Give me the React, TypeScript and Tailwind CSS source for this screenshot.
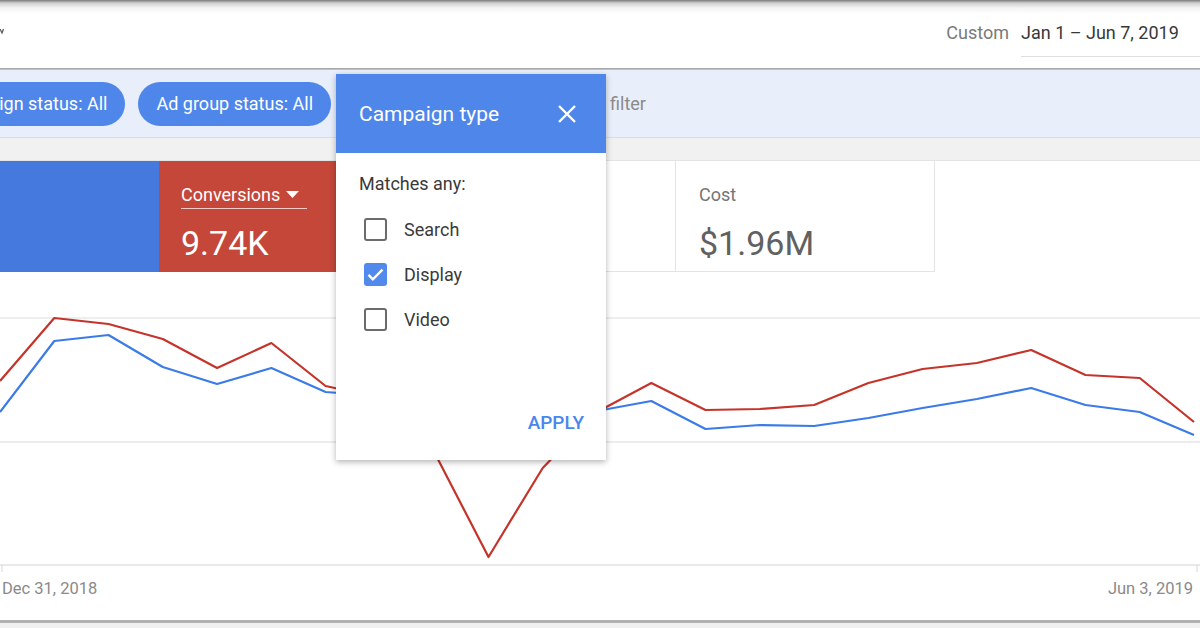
import React from "react";

const red = [
  381, 318, 324, 339, 368, 343, 386, 398, 452, 557, 468, 412, 383, 410, 409,
  405, 383, 369, 363, 350, 375, 378, 422,
];
const blue = [
  412, 341, 335, 367, 384, 368, 392, 396, 404, 410, 406, 411, 401, 429, 425,
  426, 418, 408, 399, 388, 405, 412, 435,
];

function toPoints(ys: number[]) {
  const step = 1194 / (ys.length - 1);
  return ys.map((y, i) => `${(i * step).toFixed(1)},${y}`).join(" ");
}

function Checkbox({ checked }: { checked?: boolean }) {
  if (checked) {
    return (
      <span className="flex h-[23px] w-[23px] items-center justify-center rounded-[3px] bg-[#5189ec]">
        <svg width="21" height="21" viewBox="0 0 24 24">
          <path
            d="M4 12.5l5 5L20 6.5"
            fill="none"
            stroke="#fff"
            strokeWidth="2.8"
          />
        </svg>
      </span>
    );
  }
  return (
    <span className="h-[23px] w-[23px] rounded-[3px] border-2 border-[#6b6b6b] bg-white" />
  );
}

function Chip({ label, className = "" }: { label: string; className?: string }) {
  return (
    <div
      className={`flex h-[44px] items-center rounded-full bg-[#4f86ea] px-[18px] text-[18px] text-white ${className}`}
    >
      {label}
    </div>
  );
}

export default function App() {
  return (
    <div className="relative h-[628px] w-[1200px] overflow-hidden bg-white font-['Roboto',sans-serif]">
      {/* header */}
      <div className="flex h-[68px] items-center bg-[linear-gradient(to_bottom,#7a7a7a_0px,#cfcfcf_3px,#f4f4f4_8px,#ffffff_14px)]">
        <svg width="4" height="10" viewBox="0 0 4 10" className="mt-[-6px]">
          <path d="M0 3l2 4 1.5-4" fill="none" stroke="#555" strokeWidth="1.2" />
        </svg>
        <div className="ml-auto flex items-center">
          <span className="mr-[12px] mt-[-3px] text-[18px] text-[#7a7a7a]">Custom</span>
          <div className="flex h-[46px] w-[179px] items-start border-b border-[#dedede] pt-[20px]">
            <span className="mt-[-12px] text-[18px] text-[#383838]">
              Jan 1 – Jun 7, 2019
            </span>
          </div>
        </div>
      </div>
      <div className="h-[2px] bg-[linear-gradient(to_bottom,#9a9a9a,#cfcfcf)]" />

      {/* filter bar */}
      <div className="flex h-[67px] items-center gap-[13px] bg-[#e8effb]">
        <Chip label="Campaign status: All" className="ml-[-76px]" />
        <Chip label="Ad group status: All" />
        <span className="ml-[266px] text-[18px] text-[#8a8a8a]">filter</span>
      </div>
      <div className="h-[1px] bg-[#dcdcdc]" />
      <div className="h-[22px] bg-[#f1f1f1]" />

      {/* scorecards */}
      <div className="flex h-[112px] border-t border-[#e4e4e4] bg-white">
        <div className="w-[159px] bg-[#4679de]" />
        <div className="flex w-[177px] flex-col bg-[#c4473a] pl-[22px] pt-[22px] text-white">
          <div className="flex w-[126px] items-center border-b border-[#f0c9c4] pb-[1px] text-[18px] leading-[24px]">
            Conversions
            <svg width="13" height="8" viewBox="0 0 13 8" className="ml-[6px]">
              <path d="M0 0h13L6.5 7z" fill="#fff" />
            </svg>
          </div>
          <div className="mt-[14px] text-[34px] leading-[40px]">9.74K</div>
        </div>
        <div className="w-[340px] border-b border-r border-[#e4e4e4]" />
        <div className="flex w-[259px] flex-col border-b border-r border-[#e4e4e4] pl-[23px] pt-[22px]">
          <div className="text-[18px] leading-[24px] text-[#757575]">Cost</div>
          <div className="mt-[16px] text-[34px] leading-[40px] text-[#616161]">
            $1.96M
          </div>
        </div>
      </div>

      {/* chart */}
      <svg
        width="1200"
        height="300"
        viewBox="0 272 1200 300"
        className="block"
      >
        <line x1="0" y1="318" x2="1200" y2="318" stroke="#e8e8e8" strokeWidth="1.5" />
        <line x1="0" y1="442" x2="1200" y2="442" stroke="#e6e6e6" strokeWidth="1.5" />
        <line x1="0" y1="565" x2="1200" y2="565" stroke="#e2e2e2" strokeWidth="1.5" />
        <line x1="2" y1="565" x2="2" y2="572" stroke="#d8d8d8" strokeWidth="1" />
        <line x1="1197" y1="565" x2="1197" y2="572" stroke="#d8d8d8" strokeWidth="1" />
        <polyline
          points={toPoints(blue)}
          fill="none"
          stroke="#3b7be8"
          strokeWidth="2.2"
          strokeLinejoin="round"
        />
        <polyline
          points={toPoints(red)}
          fill="none"
          stroke="#c4342a"
          strokeWidth="2.2"
          strokeLinejoin="round"
        />
      </svg>
      <div className="flex h-[48px] items-start justify-between pl-[2px] pr-[7px] pt-[5px] text-[16.5px] leading-[24px] text-[#8a8a8a]">
        <span>Dec 31, 2018</span>
        <span>Jun 3, 2019</span>
      </div>
      <div className="h-[3px] bg-[#b0b0b0]" />
      <div className="h-[5px] bg-[#f0f0f0]" />

      {/* campaign type popup */}
      <div className="absolute left-[336px] top-[74px] flex h-[386px] w-[270px] flex-col bg-white shadow-[0_2px_6px_rgba(0,0,0,0.3)]">
        <div className="flex h-[79px] items-center justify-between bg-[#4f86ea] pl-[23px] pr-[29px] text-white">
          <span className="mt-[2px] text-[21px]">Campaign type</span>
          <svg width="20" height="20" viewBox="0 0 20 20">
            <path d="M2 2L18 18M18 2L2 18" stroke="#fff" strokeWidth="2.4" />
          </svg>
        </div>
        <div className="flex flex-1 flex-col pl-[23px] pr-[22px] pt-[17px]">
          <div className="text-[18px] leading-[27px] text-[#3a3a3a]">Matches any:</div>
          <div className="mt-[21px] flex flex-col gap-[22px] pl-[5px]">
            {[
              { label: "Search" },
              { label: "Display", checked: true },
              { label: "Video" },
            ].map((o) => (
              <div key={o.label} className="flex h-[23px] items-center gap-[17px]">
                <Checkbox checked={o.checked} />
                <span className="text-[18px] text-[#3a3a3a]">{o.label}</span>
              </div>
            ))}
          </div>
          <div className="mt-auto mb-[23px] self-end text-[19px] font-medium leading-[28px] text-[#4a86ee]">
            APPLY
          </div>
        </div>
      </div>
    </div>
  );
}
